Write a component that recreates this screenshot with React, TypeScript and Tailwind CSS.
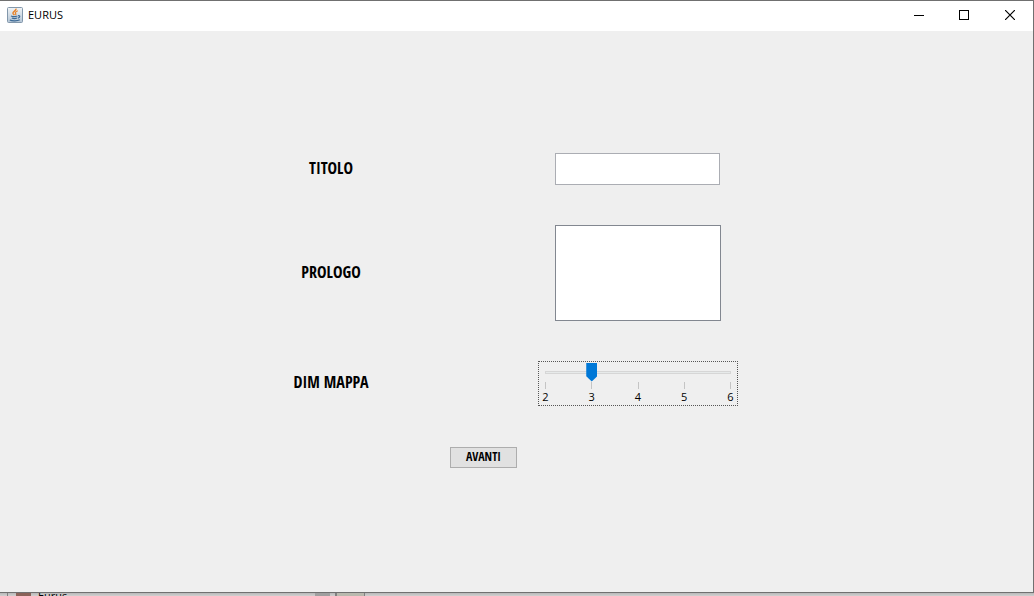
import { useState } from "react";

function JavaIcon() {
  return (
    <svg width="16" height="16" viewBox="0 0 16 16" aria-hidden="true">
      <defs>
        <linearGradient id="tile" x1="0" y1="0" x2="0" y2="1">
          <stop offset="0" stopColor="#f1f4f6" />
          <stop offset="1" stopColor="#b4c5d5" />
        </linearGradient>
      </defs>
      <rect x="0.5" y="0.5" width="15" height="15" rx="1" fill="url(#tile)" stroke="#8297ab" />
      <path d="M9 1.6C9.6 3.6 5.6 4.4 6 6.2C6.2 7 7 7.6 7.4 8.2" fill="none" stroke="#e8832a" strokeWidth="1.5" />
      <path d="M10.8 3.8C9 4.6 7.8 5.4 8.6 6.4C9.1 7 9 7.6 8.4 8.2" fill="none" stroke="#e8832a" strokeWidth="1.2" />
      <path d="M4 9C5.6 9.7 8.6 9.7 10.4 9M4.8 11C6.6 11.7 8.6 11.6 10 11M11 8.8C13.6 8.2 13 10.6 10.8 11.1M2.8 13C5 14.2 10.6 14.1 12.8 12.8" fill="none" stroke="#3d6a96" strokeWidth="1.2" />
    </svg>
  );
}

function TitleBar() {
  return (
    <header className="flex h-[30px] items-center bg-white pb-0.5 pl-[7px] text-black">
      <JavaIcon />
      <h1 className="ml-[5px] grow font-['Open_Sans',sans-serif] text-[11px] leading-4">EURUS</h1>
      <button type="button" aria-label="Minimize" className="grid h-full w-11 place-items-center">
        <svg width="10" height="10" viewBox="0 0 10 10" stroke="black" shapeRendering="crispEdges">
          <path d="M0 5.5H10" />
        </svg>
      </button>
      <button type="button" aria-label="Maximize" className="grid h-full w-[46px] place-items-center">
        <svg width="10" height="10" viewBox="0 0 10 10" fill="none" stroke="black" shapeRendering="crispEdges">
          <rect x="0.5" y="0.5" width="9" height="9" />
        </svg>
      </button>
      <button type="button" aria-label="Close" className="grid h-full w-[46px] place-items-center">
        <svg width="10" height="10" viewBox="0 0 10 10" stroke="black" strokeWidth="1.2">
          <path d="M0 0L10 10M10 0L0 10" />
        </svg>
      </button>
    </header>
  );
}

function MapSizeSlider() {
  const [size, setSize] = useState(3);
  return (
    <div className="w-[200px] border border-dotted border-[#555555] px-px pt-px">
      <div className="grid items-center">
        <div className="col-start-1 row-start-1 mx-[5px] h-[3px] border border-[#d6d6d6] bg-[#e7eaea]" />
        <input
          id="mapSize"
          type="range"
          min={2}
          max={6}
          value={size}
          onChange={(e) => setSize(Number(e.target.value))}
          className="z-10 col-start-1 row-start-1 h-[19px] w-full appearance-none bg-transparent outline-none [&::-webkit-slider-thumb]:h-[19px] [&::-webkit-slider-thumb]:w-[11px] [&::-webkit-slider-thumb]:appearance-none [&::-webkit-slider-thumb]:bg-[#0078d7] [&::-webkit-slider-thumb]:[clip-path:polygon(0_0,100%_0,100%_72%,50%_100%,0_72%)]"
        />
      </div>
      <div className="flex justify-between pb-px">
        {[2, 3, 4, 5, 6].map((n) => (
          <div key={n} className="flex w-[11px] flex-col items-center font-['Open_Sans',sans-serif] text-[11px] leading-[15px]">
            <span className="h-[7px] w-px bg-[#c4c4c4]" />
            <span>{n}</span>
          </div>
        ))}
      </div>
    </div>
  );
}

const labelStyle =
  "pb-0.5 font-['Open_Sans_Condensed','Open_Sans',sans-serif] text-[16px] leading-5 font-bold whitespace-nowrap";

export default function App() {
  return (
    <div className="flex min-h-screen flex-col bg-[#c8c8c8] text-black">
      <div className="flex grow flex-col border-t border-r border-b border-[#707070] bg-[#efefef]">
        <TitleBar />
        <main className="flex grow flex-col items-center justify-center pr-0.5 pb-[3px]">
          <form className="flex flex-col gap-10" onSubmit={(e) => e.preventDefault()}>
            <div className="grid grid-cols-[76px_200px] items-center justify-items-center gap-x-[169px] gap-y-10">
              <label htmlFor="title" className={labelStyle}>TITOLO</label>
              <input id="title" type="text" className="mr-px h-8 w-[165px] border border-[#abadb3] bg-white px-1 text-[12px] outline-none" />
              <label htmlFor="prologue" className={labelStyle}>PROLOGO</label>
              <textarea id="prologue" className="block h-24 w-[166px] resize-none border border-[#828790] bg-white px-1 text-[12px] outline-none" />
              <label htmlFor="mapSize" className={labelStyle}>DIM MAPPA</label>
              <MapSizeSlider />
            </div>
            <div className="flex justify-center pt-px pr-16">
              <button type="submit" className="h-[21px] w-[67px] border border-[#adadad] bg-[#e1e1e1] font-['Open_Sans_Condensed','Open_Sans',sans-serif] text-[12px] leading-4 font-bold">
                AVANTI
              </button>
            </div>
          </form>
        </main>
      </div>
      <footer className="flex h-[3px] items-start overflow-hidden bg-linear-to-b from-[#b8b8b8] to-[#d0d0d0] font-['Open_Sans',sans-serif] text-[11px] leading-[6px]">
        <span className="h-full w-2 border-r border-[#808080]" />
        <span className="ml-2 h-full w-[15px] bg-[#8a6258]" />
        <span className="ml-[7px]">Eurus</span>
        <span className="ml-[248px] h-full w-[15px] bg-[#9f9f9f]" />
        <span className="h-full w-[6px] border-r border-[#808080]" />
        <span className="h-full w-[29px] border-x border-[#808080] bg-[#b9b9ae]" />
      </footer>
    </div>
  );
}
